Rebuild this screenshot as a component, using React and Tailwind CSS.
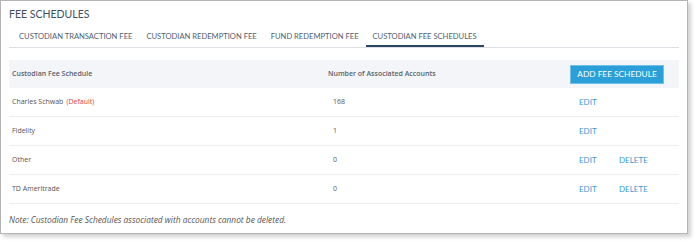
import React from 'react';

const tabs = [
  { label: 'CUSTODIAN TRANSACTION FEE' },
  { label: 'CUSTODIAN REDEMPTION FEE' },
  { label: 'FUND REDEMPTION FEE' },
  { label: 'CUSTODIAN FEE SCHEDULES', active: true },
];

const rows = [
  { name: 'Charles Schwab', isDefault: true, count: '168', canDelete: false },
  { name: 'Fidelity', count: '1', canDelete: false },
  { name: 'Other', count: '0', canDelete: true },
  { name: 'TD Ameritrade', count: '0', canDelete: true },
];

const App = () => {
  return (
    <div className="w-[697px] h-[242px] bg-white">
      <div className="w-[688px] h-[234px] border border-[#b4b4b4] bg-white shadow-[3px_3px_4px_rgba(0,0,0,0.18)] pl-2 pr-[8px] font-['Open_Sans',sans-serif]">
        {/* Title */}
        <h1 className="pt-[5px] h-[22px] text-[10.5px] leading-[16px] text-[#3e5063] font-['Lato',sans-serif]">
          FEE SCHEDULES
        </h1>

        {/* Tabs */}
        <div className="flex h-[25px] pl-[3px] border-b border-[#dcdfe3]">
          {tabs.map((tab) => (
            <div
              key={tab.label}
              className={`px-[7px] pt-[8px] text-[7.6px] leading-[11px] font-['Lato',sans-serif] text-[#506275] ${
                tab.active ? 'border-b-2 border-[#2a4663]' : ''
              }`}
            >
              {tab.label}
            </div>
          ))}
        </div>

        {/* Table */}
        <div className="mt-[12px]">
          <div className="flex items-center h-[28px] bg-[#f3f5f8] text-[7px] font-semibold text-[#59616a]">
            <div className="w-[319px] pl-[3px]">Custodian Fee Schedule</div>
            <div className="flex-1">Number of Associated Accounts</div>
            <button className="mr-[15px] h-[19px] w-[94px] bg-[#2b9fd8] text-white text-[8.3px] font-['Lato',sans-serif] font-normal border border-[#6fc0ea]">
              ADD FEE SCHEDULE
            </button>
          </div>

          {rows.map((row) => (
            <div key={row.name} className="flex items-center h-[29px] border-b border-[#eceef0] text-[7px] text-[#555]">
              <div className="w-[324px] pl-[3px]">
                {row.name}
                {row.isDefault && <span className="text-[#f0413a] ml-[3px]">(Default)</span>}
              </div>
              <div className="w-[246px]">{row.count}</div>
              <div className="w-[40px] text-[8px] text-[#3c9bd6] font-['Lato',sans-serif]">EDIT</div>
              {row.canDelete && (
                <div className="text-[8px] text-[#3c9bd6] font-['Lato',sans-serif]">DELETE</div>
              )}
            </div>
          ))}
        </div>

        {/* Note */}
        <p className="mt-[10px] text-[8.4px] italic text-[#555]">
          Note: Custodian Fee Schedules associated with accounts cannot be deleted.
        </p>
      </div>
    </div>
  );
};

export default App;
